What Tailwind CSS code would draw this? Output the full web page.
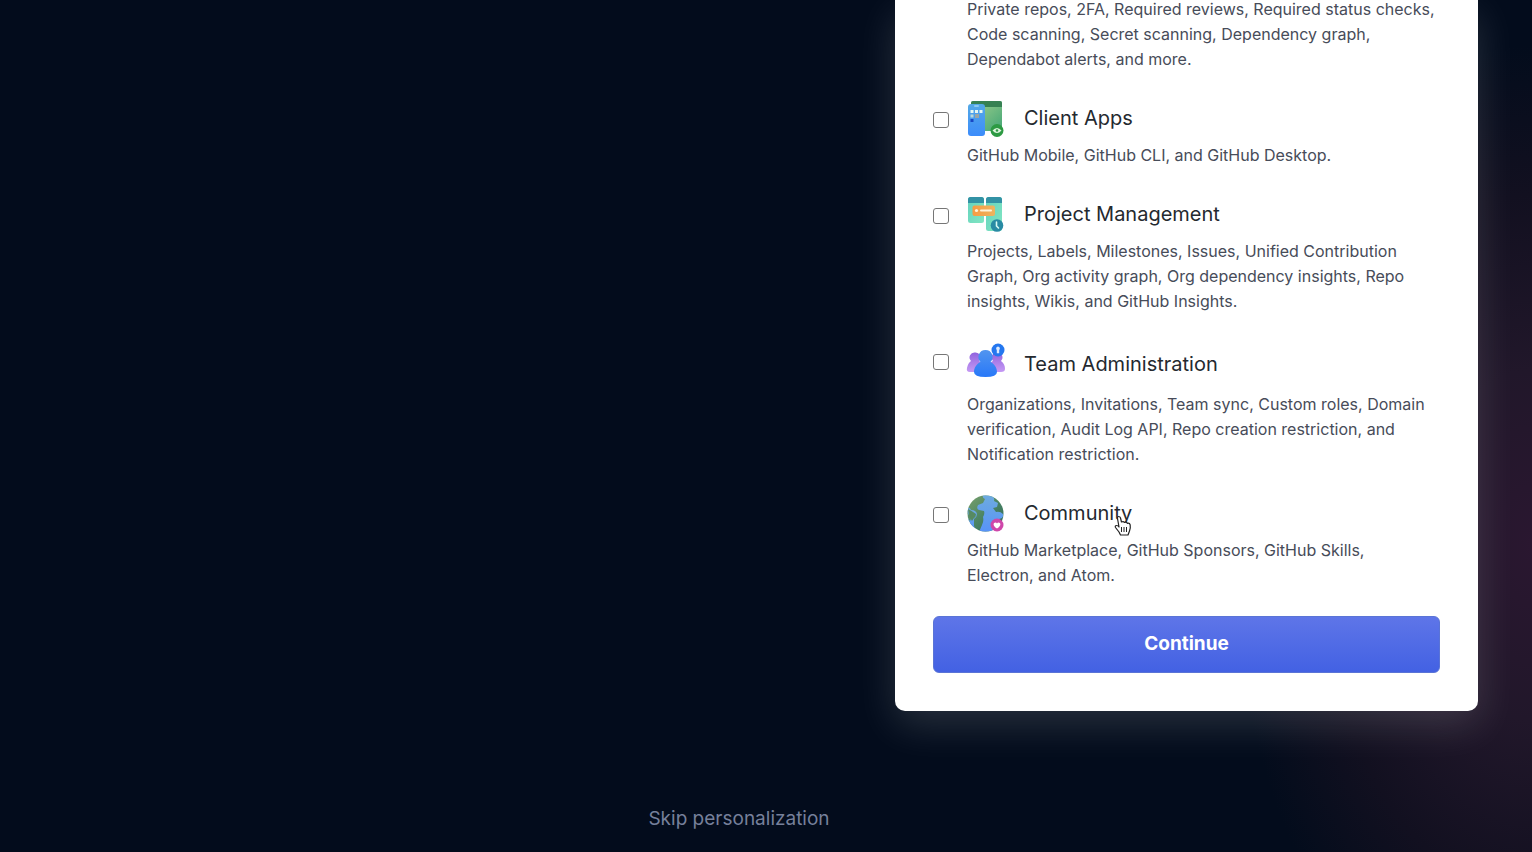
<!DOCTYPE html>
<html lang="en">
<head>
    <meta charset="UTF-8">
    <meta name="viewport" content="width=device-width, initial-scale=1.0">
    <title>Personalize your experience</title>
    <script src="https://cdn.jsdelivr.net/npm/@tailwindcss/browser@4"></script>
</head>
<body class="min-h-screen overflow-hidden bg-[#030c1c] bg-[radial-gradient(ellipse_300px_500px_at_100%_64%,#2a1730_0%,#21172a_35%,#121020_70%,transparent_100%)] bg-no-repeat font-['Inter',sans-serif] text-[#24292f]">

    <main class="flex flex-col pr-[54px]">

        <!-- Feature picker card -->
        <form class="w-[583px] self-end rounded-b-[10px] bg-white px-[38px] pb-[38px] shadow-[0_14px_40px_rgba(255,255,255,0.15)]">
            <div class="-mt-[3px] flex flex-col gap-7">

                <p class="pl-[34px] text-base leading-[25px] text-[#474c59]">Private repos, 2FA, Required reviews, Required status checks,<br>Code scanning, Secret scanning, Dependency graph,<br>Dependabot alerts, and more.</p>

                <!-- Client Apps -->
                <div class="flex gap-[18px]">
                    <input type="checkbox" id="client" class="mt-3 size-4 shrink-0 appearance-none rounded-[3px] border border-[#767676] bg-white checked:bg-[#4663e4]">
                    <div>
                        <label for="client" class="flex h-9 items-center gap-5 text-xl">
                            <svg class="size-[37px]" viewBox="0 0 37 37" aria-hidden="true">
                                <defs>
                                    <linearGradient id="win" x1="0" x2="1" y1="0" y2="1"><stop offset="0" stop-color="#a5d28e"/><stop offset="1" stop-color="#42a575"/></linearGradient>
                                    <linearGradient id="phone" x1="0" x2="0" y1="0" y2="1"><stop offset="0" stop-color="#54a9e6"/><stop offset="1" stop-color="#3c8cfb"/></linearGradient>
                                </defs>
                                <rect x="4" y="1" width="31" height="30" rx="2" fill="url(#win)"/>
                                <path d="M6 1h27a2 2 0 0 1 2 2v4H4V3a2 2 0 0 1 2-2z" fill="#368153"/>
                                <rect x="1" y="4" width="17" height="32" rx="3" fill="url(#phone)"/>
                                <rect x="7" y="5" width="5" height="2" rx="1" fill="#8bcaf1"/>
                                <path d="M3.500 10h3v3h-3zM8 10h3v3H8zM12.500 10h3v3h-3z" fill="#e6f7f2"/>
                                <path d="M3.500 14.500h3v3h-3z" fill="#bbd8d8"/>
                                <path d="M8 14h4v4H8z" fill="#98a6a7"/>
                                <path d="M3.500 19h3v3h-3z" fill="#1846c5"/>
                                <circle cx="30" cy="30.500" r="6.500" fill="#2d9a43"/>
                                <path d="M25.500 30.500Q30 25.500 34.500 30.500Q30 35.500 25.500 30.500z" fill="#dff5df"/>
                                <circle cx="30" cy="30.500" r="1.300" fill="#2d9a43"/>
                            </svg>
                            Client Apps
                        </label>
                        <p class="mt-[7px] text-base leading-[25px] text-[#474c59]">GitHub Mobile, GitHub CLI, and GitHub Desktop.</p>
                    </div>
                </div>

                <!-- Project Management -->
                <div class="flex gap-[18px]">
                    <input type="checkbox" id="project" class="mt-3 size-4 shrink-0 appearance-none rounded-[3px] border border-[#767676] bg-white checked:bg-[#4663e4]">
                    <div>
                        <label for="project" class="flex h-9 items-center gap-5 text-xl">
                            <svg class="size-[37px]" viewBox="0 0 37 37" aria-hidden="true">
                                <defs>
                                    <linearGradient id="board" x1="0" x2="1" y1="0" y2="1"><stop offset="0" stop-color="#63d2be"/><stop offset="1" stop-color="#83e6c2"/></linearGradient>
                                    <linearGradient id="bar" x1="0" x2="1"><stop offset="0" stop-color="#f69b43"/><stop offset="1" stop-color="#eeb45f"/></linearGradient>
                                </defs>
                                <rect x="1" y="1" width="16" height="26" rx="2.500" fill="url(#board)"/>
                                <path d="M3.500 1h11A2.500 2.500 0 0 1 17 3.500V7H1V3.500A2.500 2.500 0 0 1 3.500 1z" fill="#3292a5"/>
                                <rect x="19" y="1" width="16" height="34" rx="2.500" fill="url(#board)"/>
                                <path d="M21.500 1h11A2.500 2.500 0 0 1 35 3.500V7H19V3.500A2.500 2.500 0 0 1 21.500 1z" fill="#3292a5"/>
                                <rect x="5.500" y="9.500" width="22.500" height="10.500" rx="2" fill="url(#bar)"/>
                                <circle cx="9.500" cy="14.500" r="1.600" fill="#fff4dc"/>
                                <path d="M14 14.500h10" stroke="#fff4dc" stroke-width="2" stroke-linecap="round"/>
                                <circle cx="30" cy="29.500" r="6.300" fill="#298ba4"/>
                                <path d="M29.500 26v4l2 2" fill="none" stroke="#d9fbf4" stroke-width="1.600" stroke-linecap="round"/>
                            </svg>
                            Project Management
                        </label>
                        <p class="mt-[7px] text-base leading-[25px] text-[#474c59]">Projects, Labels, Milestones, Issues, Unified Contribution<br>Graph, Org activity graph, Org dependency insights, Repo<br>insights, Wikis, and GitHub Insights.</p>
                    </div>
                </div>

                <!-- Team Administration -->
                <div class="flex gap-[18px]">
                    <input type="checkbox" id="team" class="mt-3 size-4 shrink-0 appearance-none rounded-[3px] border border-[#767676] bg-white checked:bg-[#4663e4]">
                    <div>
                        <label for="team" class="flex h-[43px] items-center gap-5 text-xl">
                            <svg class="h-[43px] w-[37px] overflow-visible" viewBox="0 0 37 43" aria-hidden="true">
                                <defs>
                                    <linearGradient id="side" x1="0" x2="0" y1="0" y2="1"><stop offset="0" stop-color="#9163de"/><stop offset="1" stop-color="#c69af4"/></linearGradient>
                                    <linearGradient id="lead" x1="0" x2="0" y1="0" y2="1"><stop offset="0" stop-color="#5295ef"/><stop offset="1" stop-color="#2878f8"/></linearGradient>
                                </defs>
                                <path d="M8 10.500a5 5 0 0 1 4 8.500c4 2 5 6 5 11H3q-4 0-3-4 1-5 4-7a5 5 0 0 1 4-8.500z" fill="url(#side)"/>
                                <path d="M30 10.500a5 5 0 0 1 4 8.500c3 2 4 5 4 8q0 3-4 3H21c0-5 1-9 5-11a5 5 0 0 1 4-8.500z" fill="url(#side)"/>
                                <path d="M18.500 8a7 7 0 0 1 5 12c4 2 6.500 6 6.500 10q0 5-11.500 5T7 30c0-4 2.500-8 6.500-10a7 7 0 0 1 5-12z" fill="url(#lead)"/>
                                <circle cx="31" cy="8" r="6.500" fill="#2477ef"/>
                                <path d="M31 4.500a2 2 0 0 1 1.200 3.500v3.300h-2.400V8A2 2 0 0 1 31 4.500z" fill="#dbeafe"/>
                            </svg>
                            Team Administration
                        </label>
                        <p class="mt-[7px] text-base leading-[25px] text-[#474c59]">Organizations, Invitations, Team sync, Custom roles, Domain<br>verification, Audit Log API, Repo creation restriction, and<br>Notification restriction.</p>
                    </div>
                </div>

                <!-- Community -->
                <div class="flex gap-[18px]">
                    <input type="checkbox" id="community" class="mt-3 size-4 shrink-0 appearance-none rounded-[3px] border border-[#767676] bg-white checked:bg-[#4663e4]">
                    <div>
                        <label for="community" class="relative flex h-9 cursor-pointer items-center gap-5 text-xl">
                            <svg class="size-[37px]" viewBox="0 0 37 37" aria-hidden="true">
                                <defs>
                                    <linearGradient id="land" x1="0" x2="1" y1="0" y2="1"><stop offset="0" stop-color="#7ba26c"/><stop offset=".5" stop-color="#4b8464"/><stop offset="1" stop-color="#2d6858"/></linearGradient>
                                    <linearGradient id="sea" x1="0" x2="0" y1="0" y2="1"><stop offset="0" stop-color="#6eabdf"/><stop offset="1" stop-color="#5793f8"/></linearGradient>
                                    <clipPath id="globe"><circle cx="18.500" cy="18.500" r="18"/></clipPath>
                                </defs>
                                <g clip-path="url(#globe)">
                                    <path d="M0 0h37v37H0z" fill="url(#land)"/>
                                    <path d="M16 0q-1 3 2 4l-2 4-5 2q-2 4 1 5l5 1q1 3-1 6 1 4-1 8l-3 7h17l-1-7q1-4 4-6 5-1 4-5-3-3-7-2l-3-4 4-1 1-4-4-2q1-3-2-6z" fill="url(#sea)"/>
                                    <path d="M0 13q3-1 4 2 5 0 6 4 0 3-3 5l0 7 3 6H0V22l3 4q2-3 0-5-3-2-3-8z" fill="url(#sea)"/>
                                    <path d="M1 14q4 2 8 5 0 3-2 4l-2 3-3-5z" fill="#568a62"/>
                                </g>
                                <circle cx="30" cy="30" r="6.500" fill="#cf47aa"/>
                                <path d="M30 33.500c-5-3-3.500-6-1.500-6q1 0 1.500 1 .5-1 1.500-1c2 0 3.500 3-1.500 6z" fill="#fff"/>
                            </svg>
                            Community
                            <!-- Hand pointer -->
                            <svg class="absolute top-[20px] left-[147px] h-[22px] w-[18px]" viewBox="0 0 18 22" aria-hidden="true">
                                <path d="M5 12 3.500 3.500Q3.300 1.500 4.700 1.500T6.500 3l1 4q2-1 3 .5 2-.8 2.800.8 2.400-.5 2.900 1.700.5 3-.7 6L14 20H6.500L5 17l-3.500-4.500q-.8-2 1-2T5 12z" fill="#fff" stroke="#222" stroke-width="1.200" stroke-linejoin="round"/>
                                <path d="M7.500 12v5M10 12v5M12.500 12v5" stroke="#222"/>
                            </svg>
                        </label>
                        <p class="mt-[7px] text-base leading-[25px] text-[#474c59]">GitHub Marketplace, GitHub Sponsors, GitHub Skills,<br>Electron, and Atom.</p>
                    </div>
                </div>

                <button type="submit" class="h-[57px] w-full rounded-md border border-[#5a74d6] bg-linear-to-b from-[#5e75e8] to-[#4361e3] text-[19px] font-bold text-white">Continue</button>
            </div>
        </form>

        <button type="button" class="mt-[93px] self-center text-[19px] leading-[30px] text-[#76809b]">Skip personalization</button>
    </main>

</body>
</html>
